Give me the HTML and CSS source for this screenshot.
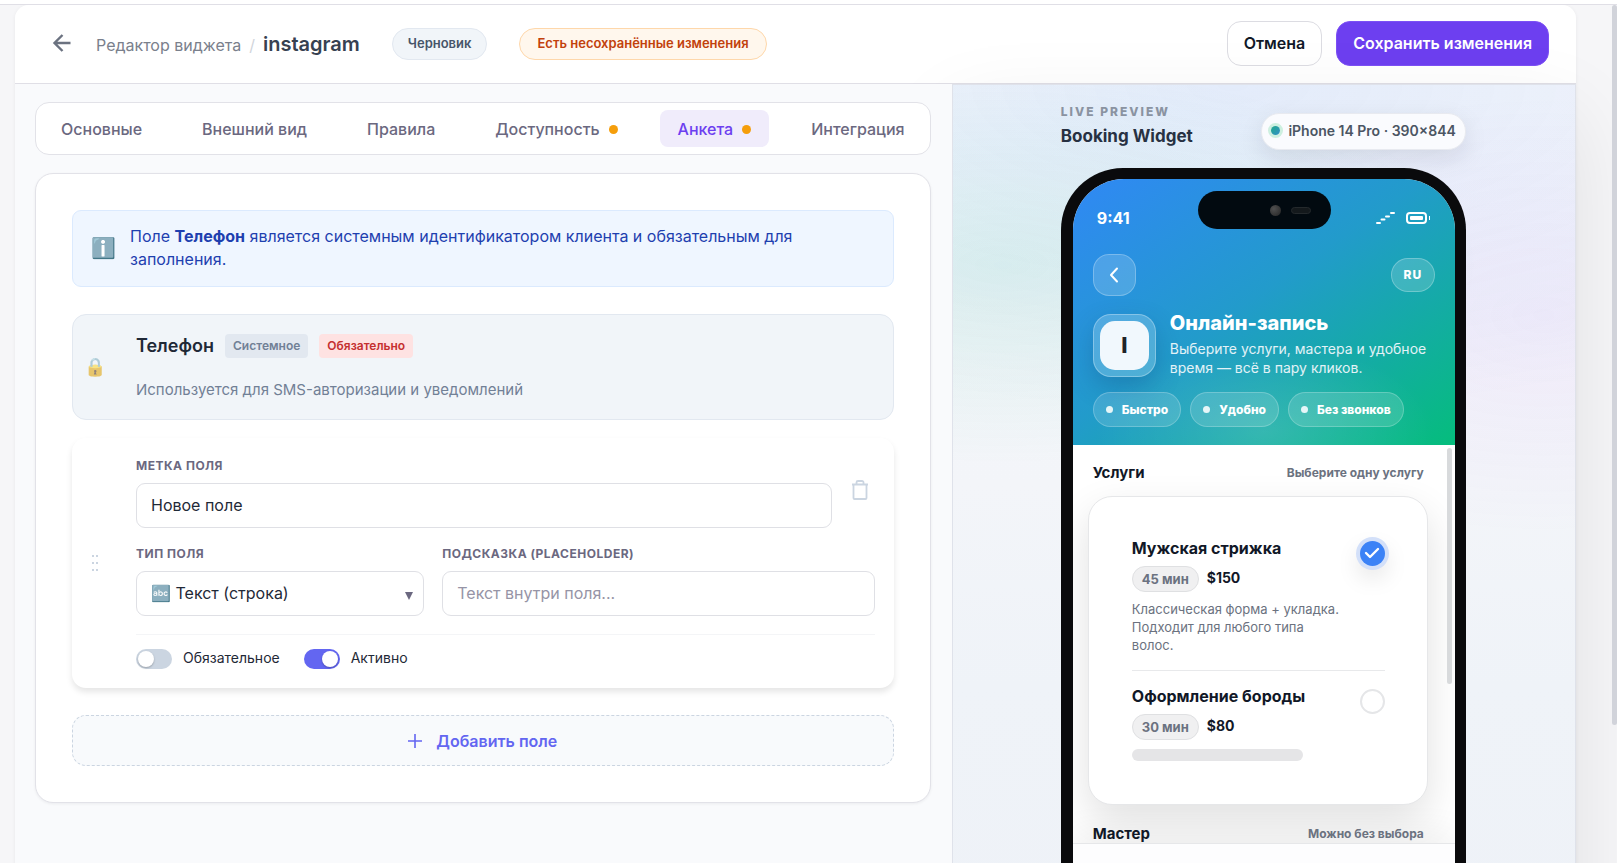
FILE: index.html
```html
<!DOCTYPE html>
<html lang="ru">
  <head>
    <meta charset="UTF-8" />
    <meta name="viewport" content="width=device-width, initial-scale=1.0" />
    <title>Редактор виджета - instagram</title>
    <link rel="stylesheet" href="styles.css">
  </head>
  <body>
    <div class="page">
      <div class="page-scroll"></div>
      <div class="app">
        <header class="topbar">
          <button class="back" type="button" aria-label="Назад">
            <svg width="20" height="20" viewBox="0 0 20 20" fill="none" stroke="currentColor" stroke-width="2.400"><path d="M18.500 10H3M10.500 2L2.500 10l8 8" /></svg>
          </button>
          <nav class="crumbs">
            <a href="#">Редактор виджета</a>
            <span class="slash">/</span>
            <h1>instagram</h1>
          </nav>
          <span class="status">Черновик</span>
          <span class="status status-warn">Есть несохранённые изменения</span>
          <div class="actions">
            <button class="btn" type="button">Отмена</button>
            <button class="btn btn-primary" type="button">Сохранить изменения</button>
          </div>
        </header>

        <div class="columns">
          <main class="editor">
            <nav class="tabs">
              <button type="button">Основные</button>
              <button type="button">Внешний вид</button>
              <button type="button">Правила</button>
              <button type="button">Доступность<i class="dot"></i></button>
              <button type="button" class="active">Анкета<i class="dot"></i></button>
              <button type="button">Интеграция</button>
            </nav>

            <section class="card">
              <div class="info">
                <span class="info-icon">ℹ️</span>
                <p>Поле <strong>Телефон</strong> является системным идентификатором клиента и обязательным для заполнения.</p>
              </div>

              <div class="system-field">
                <span class="lock">🔒</span>
                <div>
                  <div class="system-title">
                    <h2>Телефон</h2>
                    <span class="tag">Системное</span>
                    <span class="tag tag-red">Обязательно</span>
                  </div>
                  <p>Используется для SMS-авторизации и уведомлений</p>
                </div>
              </div>

              <div class="field">
                <svg class="drag" width="8" height="18" viewBox="0 0 8 18" fill="#cbd5e1"><path d="M1 1h2v2H1zM5 1h2v2H5zM1 8h2v2H1zM5 8h2v2H5zM1 15h2v2H1zM5 15h2v2H5z" /></svg>
                <div class="field-body">
                  <div class="row row-label">
                    <div>
                      <label for="label">Метка поля</label>
                      <input id="label" type="text" value="Новое поле" />
                    </div>
                    <button class="trash" type="button" aria-label="Удалить">
                      <svg width="18" height="20" viewBox="0 0 18 20" fill="none" stroke="currentColor" stroke-width="1.800"><path d="M1 4.500h16M2.500 4.500V18a1 1 0 0 0 1 1h11a1 1 0 0 0 1-1V4.500M5.500 4.500V2.500a1.500 1.500 0 0 1 1.500-1.500h4a1.500 1.500 0 0 1 1.500 1.500v2" /></svg>
                    </button>
                  </div>
                  <div class="row row-type">
                    <div class="select">
                      <label for="type">Тип поля</label>
                      <select id="type"><option>🔤 Текст (строка)</option></select>
                    </div>
                    <div>
                      <label for="hint">Подсказка (placeholder)</label>
                      <input id="hint" type="text" placeholder="Текст внутри поля..." />
                    </div>
                  </div>
                  <div class="toggles">
                    <label><input type="checkbox" />Обязательное</label>
                    <label><input type="checkbox" checked />Активно</label>
                  </div>
                </div>
              </div>

              <button class="add" type="button">
                <svg width="14" height="14" viewBox="0 0 14 14" stroke="currentColor" stroke-width="1.600"><path d="M7 0v14M0 7h14" /></svg>
                Добавить поле
              </button>
            </section>
          </main>

          <aside class="preview">
            <div class="preview-inner">
              <div class="preview-head">
                <div>
                  <div class="eyebrow">LIVE PREVIEW</div>
                  <div class="preview-title">Booking Widget</div>
                </div>
                <span class="device"><i></i>iPhone 14 Pro · 390×844</span>
              </div>

              <div class="phone">
                <div class="island"><i class="camera"></i><i class="sensor"></i></div>
                <div class="screen">
                  <div class="hero">
                    <div class="statusbar">
                      <span>9:41</span>
                      <svg width="54" height="14" viewBox="0 0 54 14" fill="none" stroke="#fff">
                        <path d="M1 12h3M5.500 8.500h3M10 5.500h3M15 2h3" stroke-width="2" stroke-linecap="round" />
                        <rect x="31" y="2" width="19" height="10" rx="3" stroke-width="2" />
                        <rect x="34" y="5" width="13" height="4" rx="1" fill="#fff" stroke="none" />
                        <path d="M53.500 5v4" stroke-width="1" />
                      </svg>
                    </div>
                    <div class="toolbar">
                      <button class="phone-back" type="button" aria-label="Назад">
                        <svg width="10" height="16" viewBox="0 0 10 16" fill="none" stroke="#fff" stroke-width="2" stroke-linecap="round" stroke-linejoin="round"><path d="M8 1.500L2 8l6 6.500" /></svg>
                      </button>
                      <button class="lang" type="button">RU</button>
                    </div>
                    <div class="brand">
                      <div class="logo"><span>I</span></div>
                      <div>
                        <h3>Онлайн-запись</h3>
                        <p>Выберите услуги, мастера и удобное время — всё в пару кликов.</p>
                      </div>
                    </div>
                    <div class="chips">
                      <span>Быстро</span>
                      <span>Удобно</span>
                      <span>Без звонков</span>
                    </div>
                  </div>

                  <div class="content">
                    <div class="thumb"></div>
                    <div class="section-head"><h4>Услуги</h4><span>Выберите одну услугу</span></div>
                    <div class="services">
                      <div class="service">
                        <div class="service-text">
                          <h5><label for="s1">Мужская стрижка</label></h5>
                          <div class="meta"><span>45 мин</span><b>$150</b></div>
                          <p>Классическая форма + укладка. Подходит для любого типа волос.</p>
                        </div>
                        <div class="pick">
                          <input id="s1" type="radio" name="service" checked />
                          <svg width="16" height="12" viewBox="0 0 16 12" fill="none" stroke="#fff" stroke-width="2.400" stroke-linecap="round" stroke-linejoin="round"><path d="M2 6l4 4 8-8" /></svg>
                        </div>
                      </div>
                      <div class="service">
                        <div class="service-text">
                          <h5><label for="s2">Оформление бороды</label></h5>
                          <div class="meta"><span>30 мин</span><b>$80</b></div>
                          <div class="skeleton"></div>
                        </div>
                        <div class="pick"><input id="s2" type="radio" name="service" /></div>
                      </div>
                    </div>
                    <div class="section-head"><h4>Мастер</h4><span>Можно без выбора</span></div>
                  </div>
                  <div class="phone-footer"></div>
                </div>
              </div>
            </div>
          </aside>
        </div>
      </div>
    </div>
  </body>
</html>
```
FILE: styles.css
```css
* {
  box-sizing: border-box;
}
body {
  margin: 0;
  padding-top: 4px;
  height: 100vh;
  overflow: hidden;
  font-family: Inter, "Noto Sans", "Liberation Sans", sans-serif;
  font-size: 16px;
  line-height: 22px;
  color: #1f2937;
  background: #fff;
}
h1, h2, h3, h4, h5, p {
  margin: 0;
}
button, input, select {
  font: inherit;
  color: inherit;
}
button {
  cursor: pointer;
}

/* page frame */
.page {
  position: relative;
  height: 100%;
  overflow: hidden;
  padding: 0 41px 0 15px;
  border-top: 1px solid #e0dfe6;
  background: #f6f6f8;
}
.page-scroll {
  position: absolute;
  z-index: 3;
  top: 0;
  right: 0;
  width: 5px;
  height: 720px;
  border-radius: 4px;
  background: #d1d3da;
}
.app {
  background: #f9fafc;
  border-radius: 14px 14px 0 0;
  box-shadow: 0 1px 4px rgba(15, 23, 42, 0.06);
}

/* top bar */
.topbar {
  display: flex;
  align-items: center;
  height: 79px;
  padding: 0 27px 2px;
  background: #fff;
  border-bottom: 1px solid #e0dfe6;
  border-radius: 14px 14px 0 0;
}
.back {
  display: flex;
  align-items: center;
  justify-content: center;
  width: 40px;
  height: 40px;
  padding: 0;
  border: 0;
  background: none;
  color: #6b7280;
}
.crumbs {
  display: flex;
  align-items: baseline;
  gap: 8px;
  margin: 2px 32px 0 14px;
}
.crumbs a {
  color: #7a808c;
  text-decoration: none;
}
.slash {
  color: #d1d5db;
}
h1 {
  font-size: 20px;
  font-weight: 600;
  color: #374151;
}
.status {
  height: 32px;
  padding: 0 15px;
  margin: 2px 32px 0 0;
  border: 1px solid #e2e8f0;
  border-radius: 16px;
  background: #f1f5f9;
  color: #475569;
  font-size: 13px;
  font-weight: 600;
  line-height: 28px;
}
.status-warn {
  padding: 0 17px;
  border-color: #fed7aa;
  background: #fff7ed;
  color: #c2410c;
}
.actions {
  display: flex;
  gap: 14px;
  margin-left: auto;
}
.btn {
  height: 45px;
  padding: 0 16px;
  border: 1px solid #dcdce2;
  border-radius: 14px;
  background: #fff;
  color: #111827;
  font-weight: 600;
}
.btn-primary {
  border-color: #7c50f5;
  background: #6d3ff0;
  color: #fff;
}

.columns {
  display: grid;
  grid-template-columns: 3fr 2fr;
}

/* editor */
.editor {
  position: relative;
  z-index: 1;
  padding: 18px 21px 60px 20px;
  background: #f9fafc;
}
.tabs {
  display: flex;
  justify-content: space-between;
  padding: 7px;
  border: 1px solid #e2e2e8;
  border-radius: 14px;
  background: #fff;
}
.tabs button {
  display: flex;
  align-items: center;
  gap: 9px;
  height: 37px;
  padding: 0 18px;
  border: 0;
  border-radius: 8px;
  background: none;
  color: #6b6880;
  font-weight: 500;
}
.tabs .active {
  background: #f0ecfb;
  color: #6d3ff0;
}
.dot {
  width: 9px;
  height: 9px;
  margin-top: 2px;
  border-radius: 50%;
  background: #f59e0b;
}
.card {
  margin-top: 18px;
  padding: 36px;
  border: 1px solid #e2e2e8;
  border-radius: 18px;
  background: #fff;
  box-shadow: 0 1px 3px rgba(15, 23, 42, 0.06);
}
.info {
  display: flex;
  align-items: center;
  gap: 14px;
  padding: 14px 84px 15px 18px;
  border: 1px solid #dbeafe;
  border-radius: 9px;
  background: #eff6ff;
  color: #1e40af;
  line-height: 23px;
}
.info-icon {
  width: 25px;
  font-size: 20px;
}
.system-field {
  display: grid;
  grid-template-columns: 44px 1fr;
  align-items: center;
  gap: 19px;
  margin-top: 27px;
  padding: 18px 18px 18px 0;
  border: 1px solid #e2e8f0;
  border-radius: 14px;
  background: #f1f5f9;
}
.lock {
  font-size: 18px;
  text-align: center;
  opacity: 0.6;
}
.system-title {
  display: flex;
  align-items: center;
  gap: 11px;
  height: 26px;
  margin-bottom: 20px;
}
h2 {
  font-size: 18px;
  font-weight: 600;
}
.tag {
  padding: 0 8px;
  border-radius: 4px;
  background: #e2e8f0;
  color: #718096;
  font-size: 12px;
  font-weight: 600;
  line-height: 24px;
}
.tag-red {
  background: #fee2e2;
  color: #c53030;
}
.system-field p {
  color: #718096;
  font-size: 15px;
}
.field {
  display: grid;
  grid-template-columns: 45px 1fr;
  align-items: center;
  gap: 19px;
  margin-top: 18px;
  padding: 19px 19px 19px 0;
  border-radius: 14px;
  background: #fff;
  box-shadow: 0 4px 6px rgba(0, 0, 0, 0.1);
}
.drag {
  justify-self: center;
}
.row {
  display: grid;
  margin-bottom: 17px;
}
.row-label {
  grid-template-columns: 1fr 30px;
  gap: 13px;
  align-items: center;
}
.row-type {
  grid-template-columns: 2fr 3fr;
  gap: 18px;
}
.row label {
  display: block;
  margin-bottom: 8px;
  color: #6b6880;
  font-size: 12px;
  font-weight: 700;
  line-height: 18px;
  letter-spacing: 0.5px;
  text-transform: uppercase;
}
.row input,
.row select {
  display: block;
  width: 100%;
  height: 45px;
  padding: 0 14px 2px;
  border: 1px solid #dfe0e5;
  border-radius: 9px;
  background: #fff;
  appearance: none;
}
.row input::placeholder {
  color: #9694a6;
}
.select {
  position: relative;
}
.select::after {
  content: "";
  position: absolute;
  right: 11px;
  bottom: 16px;
  border: 4px solid transparent;
  border-top: 8px solid #6b6880;
  border-bottom: 0;
}
.trash {
  display: flex;
  justify-content: center;
  padding: 0 0 6px;
  border: 0;
  background: none;
  color: #cbd5e1;
}
.toggles {
  display: flex;
  gap: 24px;
  margin-top: 18px;
  padding-top: 14px;
  border-top: 1px solid #f4f5f7;
}
.toggles label {
  display: flex;
  gap: 11px;
  font-size: 14px;
  line-height: 18px;
}
.toggles input {
  appearance: none;
  width: 36px;
  height: 20px;
  margin: 0;
  padding: 2px;
  border-radius: 10px;
  background: #cbd5e1;
}
.toggles input::before {
  content: "";
  display: block;
  width: 16px;
  height: 16px;
  border-radius: 50%;
  background: #fff;
  box-shadow: 0 1px 2px rgba(0, 0, 0, 0.25);
}
.toggles input:checked {
  padding-left: 18px;
  background: #6366f1;
}
.add {
  display: flex;
  align-items: center;
  justify-content: center;
  gap: 14px;
  width: 100%;
  height: 51px;
  margin-top: 27px;
  border: 1px dashed #cbd5e1;
  border-radius: 14px;
  background: #f8fafc;
  color: #6366f1;
  font-weight: 600;
}

/* live preview */
.preview {
  padding: 16px 24px 60px 23px;
  border: 1px solid #dfe2ea;
  background:
    radial-gradient(800px 330px at 45% 0, rgba(59, 130, 246, 0.1), transparent),
    radial-gradient(480px 200px at 8% 180px, rgba(16, 185, 129, 0.1), transparent),
    radial-gradient(380px 220px at 95% 230px, rgba(168, 85, 247, 0.07), transparent),
    linear-gradient(#f6f7fb, #f3f5f9 400px, #eff3f8 600px, #eef1f7);
  box-shadow: 0 30px 80px rgba(0, 0, 0, 0.09);
}
.preview-inner {
  max-width: 405px;
  margin: 0 auto;
}
.preview-head {
  display: flex;
  justify-content: space-between;
  align-items: flex-start;
  height: 67px;
}
.eyebrow {
  color: #8a93a1;
  font-size: 12px;
  font-weight: 800;
  line-height: 22px;
  letter-spacing: 2px;
}
.preview-title {
  color: #273142;
  margin-top: 1px;
  font-size: 17px;
  font-weight: 700;
  line-height: 24px;
}
.device {
  display: flex;
  align-items: center;
  gap: 8px;
  height: 37px;
  margin-top: 12px;
  padding: 0 9px 2px;
  border: 1px solid #e8eaf0;
  border-radius: 18px;
  background: #fafbfe;
  color: #4b5563;
  font-size: 14px;
  font-weight: 600;
  box-shadow: 0 8px 24px rgba(15, 23, 42, 0.1);
}
.device i {
  width: 9px;
  height: 9px;
  border-radius: 50%;
  background: linear-gradient(135deg, #22a98a, #3090c8);
  box-shadow: 0 0 0 3px #cdf0e0;
}
.phone {
  position: relative;
  padding: 11px 11px 12px 12px;
  border-radius: 62px;
  background: #0a0a0c;
}
.island {
  position: absolute;
  z-index: 2;
  top: 23px;
  left: 137px;
  display: flex;
  align-items: center;
  gap: 10px;
  width: 133px;
  height: 38px;
  padding-left: 72px;
  border-radius: 19px;
  background: #020a10;
}
.camera {
  width: 11px;
  height: 11px;
  border-radius: 50%;
  background: radial-gradient(circle at 35% 35%, #505050, #242424);
}
.sensor {
  width: 20px;
  height: 7px;
  border: 1px solid #24292c;
  border-radius: 4px;
  background: #14191c;
}
.screen {
  display: flex;
  flex-direction: column;
  height: 827px;
  overflow: hidden;
  border-radius: 51px;
  background: #fff;
}
.hero {
  padding: 25px 20px 18px;
  color: #fff;
  background:
    radial-gradient(ellipse 170px 90px at 50% 95%, rgba(255, 255, 255, 0.14), transparent),
    linear-gradient(145deg, #3088f5, #229bcb 46%, #05bd7c);
}
.statusbar {
  display: flex;
  justify-content: space-between;
  align-items: center;
  height: 28px;
  padding: 0 5px 0 4px;
  font-weight: 700;
}
.toolbar {
  display: flex;
  justify-content: space-between;
  align-items: center;
  margin: 22px 0 18px;
}
.phone-back,
.lang {
  display: flex;
  align-items: center;
  justify-content: center;
  width: 43px;
  height: 42px;
  padding: 0;
  border: 1px solid rgba(255, 255, 255, 0.25);
  border-radius: 16px;
  background: rgba(255, 255, 255, 0.17);
}
.lang {
  width: 44px;
  height: 34px;
  border-radius: 17px;
  font-size: 12px;
  font-weight: 800;
  letter-spacing: 1px;
}
.brand {
  display: flex;
  gap: 14px;
  height: 63px;
}
.logo {
  flex: none;
  width: 63px;
  height: 63px;
  padding: 6px;
  border: 1px solid rgba(255, 255, 255, 0.3);
  border-radius: 18px;
  background: rgba(255, 255, 255, 0.2);
  box-shadow: 0 10px 24px rgba(15, 60, 110, 0.25);
}
.logo span {
  display: block;
  border-radius: 15px;
  background: #f1f8fd;
  color: #1f2328;
  font-size: 22px;
  font-weight: 800;
  line-height: 49px;
  text-align: center;
}
h3 {
  margin: -3px 0 4px;
  font-size: 20px;
  font-weight: 800;
  line-height: 24px;
}
.brand p {
  color: #e2f2f7;
  font-size: 14px;
  line-height: 19px;
}
.chips {
  display: flex;
  gap: 9px;
  margin-top: 15px;
}
.chips span {
  display: flex;
  align-items: center;
  gap: 9px;
  height: 35px;
  padding: 0 12px;
  border: 1px solid rgba(255, 255, 255, 0.22);
  border-radius: 18px;
  background: rgba(255, 255, 255, 0.14);
  font-size: 12px;
  font-weight: 800;
}
.chips span::before {
  content: "";
  width: 7px;
  height: 7px;
  border-radius: 50%;
  background: #e6f6f8;
}
.content {
  position: relative;
  flex: 1;
  min-height: 0;
  padding: 17px 27px 0 15px;
  overflow: hidden;
}
.thumb {
  position: absolute;
  top: 3px;
  right: 3px;
  width: 5px;
  height: 236px;
  border-radius: 3px;
  background: #d8dadc;
}
.section-head {
  display: flex;
  justify-content: space-between;
  align-items: center;
  padding: 0 4px 0 5px;
}
.section-head span {
  color: #6b7280;
  font-size: 12px;
  font-weight: 700;
}
h4 {
  color: #111827;
  font-size: 15px;
  font-weight: 700;
}
.services {
  margin: 12px 0 18px;
  padding: 40px 42px 43px 43px;
  border: 1px solid #e6e7e9;
  border-radius: 24px;
  background: #fff;
  box-shadow: 0 16px 40px rgba(0, 0, 0, 0.12);
}
.service {
  display: flex;
  justify-content: space-between;
}
.service + .service {
  margin-top: 16px;
  padding-top: 14px;
  border-top: 1px solid #e8e9eb;
}
.service-text {
  width: 210px;
}
h5 {
  color: #111827;
  font-size: 16px;
  font-weight: 700;
}
.meta {
  display: flex;
  gap: 8px;
  height: 26px;
  margin: 7px 0 8px;
  color: #111827;
  font-size: 14px;
  line-height: 24px;
}
.meta span {
  padding: 0 9px;
  border: 1px solid #dfe0e2;
  border-radius: 13px;
  background: #f0f0f1;
  color: #6b7280;
  font-size: 13px;
  font-weight: 700;
  line-height: 25px;
}
.service-text p {
  color: #6b7280;
  font-size: 13px;
  line-height: 18px;
}
.skeleton {
  width: 171px;
  height: 12px;
  margin-top: 9px;
  border-radius: 6px;
  background: #e5e5e7;
}
.pick {
  position: relative;
  margin-top: 4px;
}
.pick input {
  appearance: none;
  display: block;
  width: 25px;
  height: 25px;
  margin: 0;
  border: 2px solid #e5e6e8;
  border-radius: 50%;
}
.pick input:checked {
  border: 0;
  background: #3b82f6;
  box-shadow: 0 0 0 4px #d3e0f9, 0 10px 24px rgba(0, 0, 0, 0.15);
}
.pick svg {
  position: absolute;
  top: 6px;
  left: 4px;
}
.phone-footer {
  height: 163px;
  border-top: 1px solid #e6e7e9;
  background: #fdfdfe;
  box-shadow: 0 -12px 30px rgba(0, 0, 0, 0.06);
}
```
